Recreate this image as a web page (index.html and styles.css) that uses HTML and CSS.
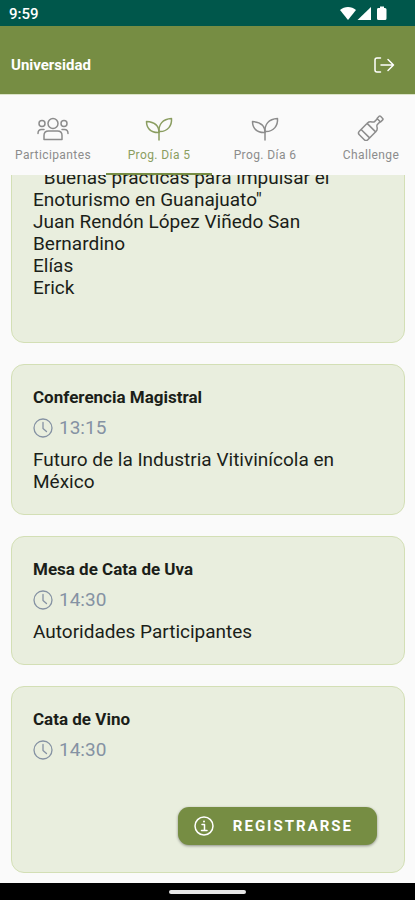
FILE: index.html
```html
<!DOCTYPE html>
<html lang="es">
<head>
    <meta charset="UTF-8">
    <meta name="viewport" content="width=device-width, initial-scale=1.0">
    <title>Universidad</title>
    <link rel="stylesheet" href="styles.css">
</head>
<body>
    <!-- Shared icons -->
    <svg class="sprite" aria-hidden="true">
        <symbol id="icon-clock" viewBox="0 0 20 20">
            <circle cx="10" cy="10" r="9"/>
            <path d="M10 4.500V10.500L13.500 13.500"/>
        </symbol>
        <symbol id="icon-plant" viewBox="0 0 32 26">
            <path d="M16 25V17C15.500 9.500 19.500 4 28.500 3.500C29 10.500 25 16.500 17 16.500"/>
            <path d="M16 17.500C16 11 11.500 7 3.500 6.500C3.500 13 7.500 18 16 17.500"/>
        </symbol>
    </svg>

    <div class="app">
        <div class="status-bar">
            <span>9:59</span>
            <svg class="status-icons" viewBox="0 0 48 16">
                <path d="M0 4C4.500 0 11.500 0 16 4L8 14Z"/>
                <path d="M31 1V14H17.500Z"/>
                <path d="M38 2H40V0.500H44V2H45Q46.500 2 46.500 3.500V12.500Q46.500 14 45 14H38.500Q37 14 37 12.500V3.500Q37 2 38 2Z"/>
            </svg>
        </div>

        <header class="top-bar">
            <h1>Universidad</h1>
            <button class="logout-button" aria-label="Salir">
                <svg viewBox="0 0 22 18">
                    <path d="M7.500 2H4Q2 2 2 4V14Q2 16 4 16H7.500M8 9H20.500M15 3.500L20.500 9L15 14.500"/>
                </svg>
            </button>
        </header>

        <nav class="tabs">
            <a class="tab" href="#participantes">
                <svg viewBox="0 0 32 26">
                    <circle cx="16" cy="8.500" r="5"/>
                    <circle cx="5" cy="8.500" r="3"/>
                    <circle cx="27" cy="8.500" r="3"/>
                    <path d="M7 24.500V20.500Q7 16 11.500 16H20.500Q25 16 25 20.500V24.500ZM1 18.500Q1 14.500 4.500 14.500H7M31 18.500Q31 14.500 27.500 14.500H25"/>
                </svg>
                <span>Participantes</span>
            </a>
            <a class="tab active" href="#dia5">
                <svg><use href="#icon-plant"/></svg>
                <span>Prog. Día 5</span>
            </a>
            <a class="tab" href="#dia6">
                <svg><use href="#icon-plant"/></svg>
                <span>Prog. Día 6</span>
            </a>
            <a class="tab" href="#challenge">
                <svg viewBox="0 0 32 26">
                    <g transform="rotate(45 16 13)">
                        <path d="M13.500 -1Q13.500 -2 14.500 -2H17.500Q18.500 -2 18.500 -1V2H13.500ZM14 2V6Q14 7 12.500 8Q10 9.500 10 12V23.500Q10 26 12.500 26H19.500Q22 26 22 23.500V12Q22 9.500 19.500 8Q18 7 18 6V2M10 12.500H22M10 21H22"/>
                    </g>
                </svg>
                <span>Challenge</span>
            </a>
        </nav>

        <main class="schedule">
            <article class="card">
                <p class="details">
                    &nbsp;"Buenas prácticas para impulsar el Enoturismo en Guanajuato"<br>
                    Juan Rendón López Viñedo San Bernardino<br>
                    Elías<br>
                    Erick<br>
                    &nbsp;
                </p>
            </article>

            <article class="card">
                <h2>Conferencia Magistral</h2>
                <p class="time"><svg><use href="#icon-clock"/></svg>13:15</p>
                <p class="details">Futuro de la Industria Vitivinícola en México</p>
            </article>

            <article class="card">
                <h2>Mesa de Cata de Uva</h2>
                <p class="time"><svg><use href="#icon-clock"/></svg>14:30</p>
                <p class="details">Autoridades Participantes</p>
            </article>

            <article class="card">
                <h2>Cata de Vino</h2>
                <p class="time"><svg><use href="#icon-clock"/></svg>14:30</p>
                <p class="details">&nbsp;</p>
                <button class="register-button">
                    <svg viewBox="0 0 20 20">
                        <circle cx="10" cy="10" r="9"/>
                        <path d="M8 8.500H10.500V14.500M7.500 14.500H13"/>
                        <circle class="dot" cx="10" cy="5.500" r="1"/>
                    </svg>
                    <span>REGISTRARSE</span>
                </button>
            </article>
        </main>

        <div class="home-bar"><div class="home-handle"></div></div>
    </div>
</body>
</html>
```

FILE: styles.css
```css
* {
    box-sizing: border-box;
}
body {
    margin: 0;
    font-family: Roboto, "Liberation Sans", sans-serif;
    background-color: #fafafa;
    color: #1b1e19;
}
h1, h2, p {
    margin: 0;
}
svg {
    fill: none;
    stroke: currentColor;
    stroke-linecap: round;
    stroke-linejoin: round;
}
.sprite {
    position: absolute;
    width: 0;
    height: 0;
}
.app {
    display: flex;
    flex-direction: column;
    height: 100vh;
    overflow: hidden;
}

/* Android status bar */
.status-bar {
    display: flex;
    align-items: center;
    justify-content: space-between;
    height: 26px;
    padding: 2px 27px 0 9px;
    background-color: #00574b;
    color: white;
    font-size: 15px;
    font-weight: 500;
}
.status-icons {
    width: 48px;
    height: 16px;
    fill: white;
    stroke: none;
}

.top-bar {
    display: flex;
    align-items: center;
    justify-content: space-between;
    height: 69px;
    padding: 10px 20px 0 11px;
    background-color: #768d43;
    border-bottom: 1px solid #dbe3c8;
    color: white;
}
.top-bar h1 {
    font-size: 15px;
    font-weight: 700;
}
.logout-button {
    display: flex;
    padding: 0;
    border: none;
    background: none;
    color: white;
    cursor: pointer;
}
.logout-button svg {
    width: 22px;
    height: 18px;
    stroke-width: 1.5;
}

.tabs {
    display: flex;
    overflow: hidden;
    flex-shrink: 0;
}
.tab {
    display: flex;
    flex: 0 0 106px;
    flex-direction: column;
    align-items: center;
    gap: 6px;
    height: 80px;
    padding-top: 20px;
    border-bottom: 2px solid transparent;
    color: #8c8c8c;
    font-size: 12px;
    line-height: 16px;
    letter-spacing: 0.4px;
    text-decoration: none;
}
.tab svg {
    width: 32px;
    height: 26px;
    stroke-width: 1.5;
}
.tab.active {
    border-color: #768d43;
    color: #8a9d60;
}

/* List is scrolled to its end */
.schedule {
    display: flex;
    flex: 1;
    flex-direction: column;
    justify-content: flex-end;
    gap: 21px;
    min-height: 0;
    padding: 0 10px 10px 11px;
    overflow: hidden;
}
.card {
    display: flex;
    flex-shrink: 0;
    flex-direction: column;
    padding: 21px;
    border: 1px solid #d3dfb5;
    border-radius: 13px;
    background-color: #e9eede;
}
.card h2 {
    margin-bottom: 9px;
    font-size: 17px;
    font-weight: 700;
    line-height: 22px;
}
.time {
    display: flex;
    align-items: center;
    gap: 6px;
    margin-bottom: 10px;
    color: #8592a3;
    font-size: 19px;
    line-height: 22px;
}
.time svg {
    width: 20px;
    height: 20px;
    stroke-width: 1.3;
}
.details {
    font-size: 19px;
    line-height: 22px;
}

.register-button {
    display: flex;
    align-items: center;
    align-self: flex-end;
    gap: 19px;
    height: 38px;
    margin: 14px 6px 6px;
    padding: 0 24px 0 16px;
    border: none;
    border-radius: 11px;
    background-color: #768d43;
    box-shadow: 0 1px 3px rgba(0, 0, 0, 0.4);
    color: white;
    font-family: inherit;
    font-size: 15px;
    font-weight: 700;
    letter-spacing: 2px;
    cursor: pointer;
}
.register-button svg {
    width: 20px;
    height: 20px;
    stroke-width: 1.5;
}
.register-button .dot {
    fill: white;
    stroke: none;
}

.home-bar {
    display: flex;
    align-items: center;
    justify-content: center;
    height: 17px;
    background-color: black;
}
.home-handle {
    width: 77px;
    height: 4px;
    border-radius: 2px;
    background-color: #e6e6e6;
}
```
